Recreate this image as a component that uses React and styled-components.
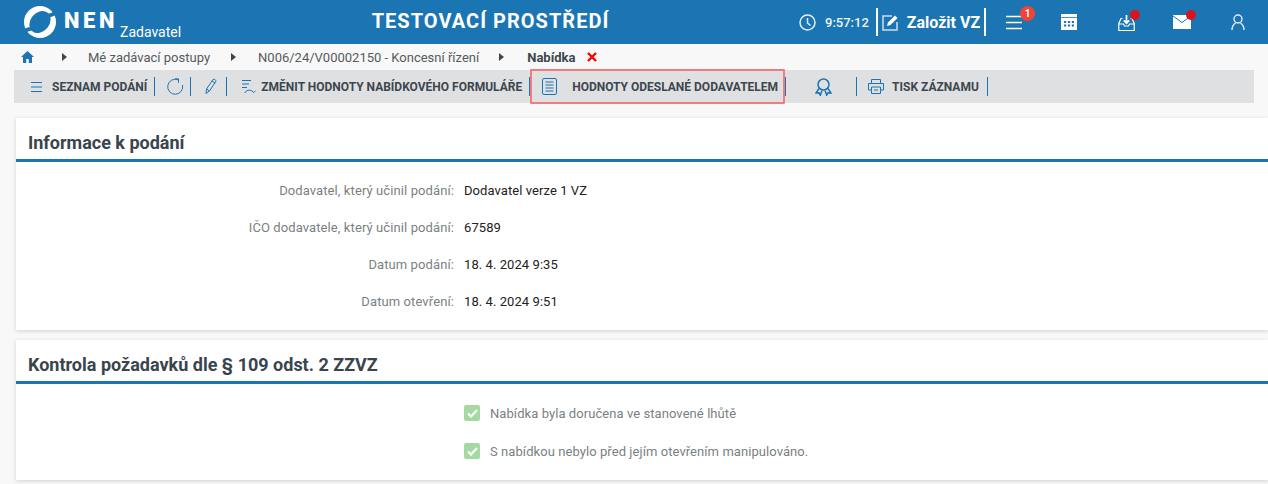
import React from 'react';
import styled, { createGlobalStyle } from 'styled-components';

const Global = createGlobalStyle`
  html, body { margin: 0; padding: 0; background: #f8f8f8; font-family: Roboto, "Liberation Sans", sans-serif; }
  body { width: 1268px; height: 484px; overflow: hidden; }
`;
const Header = styled.header`
  height: 44px; background: #1c75b3; color: #fff; display: flex; align-items: center; position: relative;
`;
const Logo = styled.div`
  width: 352px; padding-left: 24px; box-sizing: border-box; display: flex; align-items: center; height: 44px; flex: none;
`;
const Nen = styled.span`
  font-size: 22px; font-weight: 900; letter-spacing: 3.6px; margin-left: 8px; width: 56px; line-height: 26px; margin-top: -3px;
`;
const Role = styled.span`
  font-size: 14px; font-weight: 400; margin-top: 20px; line-height: 16px;
`;
const Title = styled.div`
  width: 277px; text-align: center; font-size: 20px; font-weight: 700; letter-spacing: 1.02px; flex: none; margin-top: -2px;
`;
const Right = styled.div`
  display: flex; align-items: center; margin-left: 170px; height: 44px;
`;
const Time = styled.span`
  font-size: 13px; font-weight: 500; margin-left: 9px; margin-right: 7px; color: #eef4f9;
`;
const WhiteSep = styled.span`
  width: 2px; height: 28px; background: #fff; flex: none; margin-top: -1px;
`;
const Create = styled.span`
  font-size: 16px; font-weight: 700; margin-left: 8px; margin-right: 4px; white-space: nowrap;
`;
const TopIcon = styled.span`
  width: 22px; height: 22px; display: flex; align-items: center; justify-content: center; position: relative; flex: none;
  margin-left: ${p => p.$ml}px;
`;
const Badge = styled.span`
  position: absolute; top: -5px; right: -10px; width: 15px; height: 15px; border-radius: 50%; background: #f44336;
  font-size: 10px; font-weight: 700; line-height: 15px; text-align: center; color: #fff;
`;
const Dot = styled.span`
  position: absolute; top: -1px; right: -3px; width: 10px; height: 10px; border-radius: 50%; background: #d9141c;
`;
const Crumbs = styled.nav`
  height: 26px; display: flex; align-items: center; font-size: 13px; color: #555b60; padding-left: 21px;
`;
const Arrow = styled.span`
  width: 0; height: 0; border-left: 5px solid #3d464d; border-top: 4px solid transparent; border-bottom: 4px solid transparent;
  margin-left: ${p => p.$ml}px; margin-right: ${p => p.$mr}px; flex: none;
`;
const Current = styled.b`
  font-weight: 700; color: #3d464d;
`;
const Toolbar = styled.div`
  height: 33px; margin-left: 14px; margin-right: 14px; background: #dfe0e2; display: flex; align-items: center; position: relative;
  font-size: 12px; font-weight: 700; color: #3d464d; white-space: nowrap;
`;
const Tool = styled.div`
  display: flex; align-items: center; height: 33px; padding-left: ${p => p.$pl}px; padding-right: ${p => p.$pr}px; flex: none;
`;
const ToolSep = styled.span`
  width: 1px; height: 19px; background: #1c75b3; flex: none;
`;
const ToolLabel = styled.span`
  margin-left: ${p => p.$ml}px;
`;
const Highlight = styled.span`
  position: absolute; left: 516px; top: -1px; width: 255px; height: 35px; border: 2px solid #f07c80; border-radius: 1px; box-sizing: border-box; pointer-events: none;
`;
const Card = styled.section`
  margin-left: 16px; background: #fff; box-shadow: 0 1px 4px rgba(0,0,0,.16); height: ${p => p.$h}px; margin-top: ${p => p.$mt}px;
`;
const CardTitle = styled.h2`
  margin: 0; box-sizing: border-box; padding: 14px 0 0 12px; font-size: 18px; line-height: 21px; font-weight: 700; color: #39444d;
  border-bottom: 3px solid #1c75b3; height: 44px;
`;
const Rows = styled.div`
  padding-top: 10px;
`;
const Row = styled.div`
  height: 37px; display: flex; align-items: center; font-size: 13px; letter-spacing: 0.07px;
`;
const Label = styled.span`
  width: 438px; text-align: right; color: #7b7f83; flex: none; letter-spacing: 0.1px;
`;
const Value = styled.span`
  margin-left: 10px; color: #222;
`;
const Checks = styled.div`
  padding-top: 10px;
`;
const CheckRow = styled.div`
  height: 38px; display: flex; align-items: center; padding-left: 448px; font-size: 13px; letter-spacing: 0.07px; color: #7b7f83;
`;
const Box = styled.span`
  width: 16px; height: 16px; border-radius: 2px; background: #a5d9a2; display: flex; align-items: center; justify-content: center; margin-right: 10px; flex: none;
`;

const LogoMark = () => (
  <svg width="32" height="32" viewBox="0 0 32 32" style={{ marginTop: -1, flex: 'none' }}>
    <circle cx="16" cy="16" r="16" fill="#fff" />
    <ellipse cx="16" cy="16" rx="12" ry="9.500" transform="rotate(-50 16 16)" fill="#1c75b3" />
    <path d="M21 7.500C25 8 28.500 7 31 4l2 4C29.500 10.500 26.500 11.500 24 11zM11 24.500C7 24 3.500 25 1 28l-2-4C2.500 21.500 5.500 20.500 8 21z" fill="#1c75b3" />
  </svg>
);
const S = { stroke: '#1c75b3', fill: 'none', strokeWidth: 1 };

export default function App() {
  return (
    <>
      <Global />
      <Header>
        <Logo>
          <LogoMark />
          <Nen>NEN</Nen>
          <Role>Zadavatel</Role>
        </Logo>
        <Title>TESTOVACÍ PROSTŘEDÍ</Title>
        <Right>
          <svg width="17" height="17" viewBox="0 0 17 17" fill="none" stroke="#e6eff6" strokeWidth="1.500"><circle cx="8.500" cy="8.500" r="7.500"/><path d="M8.500 4v5l3 2.500"/></svg>
          <Time>9:57:12</Time>
          <WhiteSep />
          <svg width="17" height="17" viewBox="0 0 17 17" fill="none" style={{ marginLeft: 4 }}>
            <path d="M10 2H1v14h14V8" stroke="#c9deed" strokeWidth="1.500"/>
            <path d="M5 12l1-3.500L13 1.500l2.500 2.500-7 7z" fill="#fff"/>
          </svg>
          <Create>Založit VZ</Create>
          <WhiteSep />
          <TopIcon $ml={17}>
            <svg width="16" height="15" viewBox="0 0 16 15" stroke="#fff" strokeWidth="1.600"><path d="M0 1.500h16M0 7.500h16M0 13.500h16"/></svg>
            <Badge>1</Badge>
          </TopIcon>
          <TopIcon $ml={33}>
            <svg width="16" height="16" viewBox="0 0 16 16"><path d="M0 0h16v16H0z" fill="#fff"/><path d="M0 3.500h16" stroke="#1c75b3" strokeWidth=".8"/><path d="M3 7h2.200v2H3zM6.900 7h2.200v2H6.900zM10.800 7H13v2h-2.200zM3 10.500h2.200v2H3zM6.900 10.500h2.200v2H6.900zM10.800 10.500H13v2h-2.200z" fill="#1c75b3"/></svg>
          </TopIcon>
          <TopIcon $ml={35}>
            <svg width="17" height="17" viewBox="0 0 17 17" fill="none" stroke="#fff" strokeWidth="1.200"><path d="M4.500 4.500H3L.8 9.500v7h15.400v-7L14 4.500h-1.500"/><path d="M1 10h4.500l1 2h4l1-2H16"/><path d="M8.500 1v8M5.800 6.300l2.700 2.900 2.700-2.900" strokeWidth="1.700"/></svg>
            <Dot />
          </TopIcon>
          <TopIcon $ml={34}>
            <svg width="18" height="14" viewBox="0 0 18 14"><path d="M0 0h18v14H0z" fill="#fff"/><path d="M0 1l9 6.500L18 1" fill="none" stroke="#1c75b3" strokeWidth="1"/></svg>
            <Dot />
          </TopIcon>
          <TopIcon $ml={34}>
            <svg width="14" height="16" viewBox="0 0 14 16" fill="none" stroke="#e6eff6" strokeWidth="1.400"><circle cx="7" cy="5" r="4"/><path d="M1 16c0-4 2-6 3.500-7M13 16c0-4-2-6-3.500-7"/></svg>
          </TopIcon>
        </Right>
      </Header>
      <Crumbs>
        <svg width="13" height="12" viewBox="0 0 13 12" fill="#1c75b3"><path d="M6.500 0L0 6h2v6h3.200V8h2.600v4H11V6h2z"/></svg>
        <Arrow $ml={28} $mr={21} />
        <span>Mé zadávací postupy</span>
        <Arrow $ml={21} $mr={22} />
        <span>N006/24/V00002150 - Koncesní řízení</span>
        <Arrow $ml={20} $mr={23} />
        <Current>Nabídka</Current>
        <svg width="10" height="10" viewBox="0 0 10 10" stroke="#f00" strokeWidth="2.400" style={{ marginLeft: 12 }}><path d="M1 1l8 8M9 1L1 9"/></svg>
      </Crumbs>
      <Toolbar>
        <Highlight />
        <Tool $pl={17} $pr={7}>
          <svg width="11" height="10" viewBox="0 0 11 10" stroke="#1c75b3"><path d="M0 .5h11M0 5h11M0 9.500h11"/></svg>
          <ToolLabel $ml={10}>SEZNAM PODÁNÍ</ToolLabel>
        </Tool>
        <ToolSep />
        <Tool $pl={12} $pr={6}>
          <svg width="17" height="17" viewBox="0 0 17 17" {...S}><path d="M11 1.800A7.500 7.500 0 1 0 15.500 7M8 .8h3.500v4"/></svg>
        </Tool>
        <ToolSep />
        <Tool $pl={14} $pr={9}>
          <svg width="12" height="17" viewBox="0 0 12 17" {...S}><path d="M1.500 11L8 1.500c1-.9 3.300.5 2.800 1.800L4.500 13 1 15.500zM7 3l3.300 2.200M1.500 11l3 2"/></svg>
        </Tool>
        <ToolSep />
        <Tool $pl={15} $pr={7}>
          <svg width="14" height="15" viewBox="0 0 14 15" {...S}><path d="M0 1.500h9M0 5h7M0 8.500h5M3 14c1-3 5-3.500 7-2l1.500 1.500 2-1.500"/></svg>
          <ToolLabel $ml={5}>ZMĚNIT HODNOTY NABÍDKOVÉHO FORMULÁŘE</ToolLabel>
        </Tool>
        <ToolSep />
        <Tool $pl={12} $pr={7}>
          <svg width="15" height="17" viewBox="0 0 15 17" {...S}><rect x=".5" y=".5" width="14" height="16" rx="1.500"/><path d="M3.500 4h8M3.500 7h8M3.500 10h8M3.500 13h8"/></svg>
          <ToolLabel $ml={15}>HODNOTY ODESLANÉ DODAVATELEM</ToolLabel>
        </Tool>
        <ToolSep />
        <Tool $pl={29} $pr={24}>
          <svg width="17" height="18" viewBox="0 0 17 18" fill="none" stroke="#1c75b3" strokeWidth="1.500"><circle cx="8.500" cy="6.500" r="5.500"/><path d="M4 10.500L1 15l3-.3 1.300 2.500L7 12.500M13 10.500l3 4.500-3-.3-1.300 2.500L10 12.500"/></svg>
        </Tool>
        <ToolSep />
        <Tool $pl={11} $pr={8}>
          <svg width="16" height="15" viewBox="0 0 16 15" {...S}><path d="M3.500 4.500V.5h9v4M3.500 11H.5V4.500h15V11h-3M3.500 8h9v6.500h-9zM6 11h4"/></svg>
          <ToolLabel $ml={8}>TISK ZÁZNAMU</ToolLabel>
        </Tool>
        <ToolSep />
      </Toolbar>
      <Card $h={212} $mt={15}>
        <CardTitle>Informace k podání</CardTitle>
        <Rows>
          <Row><Label>Dodavatel, který učinil podání:</Label><Value>Dodavatel verze 1 VZ</Value></Row>
          <Row><Label>IČO dodavatele, který učinil podání:</Label><Value>67589</Value></Row>
          <Row><Label>Datum podání:</Label><Value>18. 4. 2024 9:35</Value></Row>
          <Row><Label>Datum otevření:</Label><Value>18. 4. 2024 9:51</Value></Row>
        </Rows>
      </Card>
      <Card $h={140} $mt={10}>
        <CardTitle>Kontrola požadavků dle § 109 odst. 2 ZZVZ</CardTitle>
        <Checks>
          {['Nabídka byla doručena ve stanovené lhůtě', 'S nabídkou nebylo před jejím otevřením manipulováno.'].map(t => (
            <CheckRow key={t}>
              <Box><svg width="11" height="9" viewBox="0 0 11 9" fill="none" stroke="#fff" strokeWidth="2.200"><path d="M1 4.500l3 3L10 1"/></svg></Box>
              {t}
            </CheckRow>
          ))}
        </Checks>
      </Card>
    </>
  );
}
